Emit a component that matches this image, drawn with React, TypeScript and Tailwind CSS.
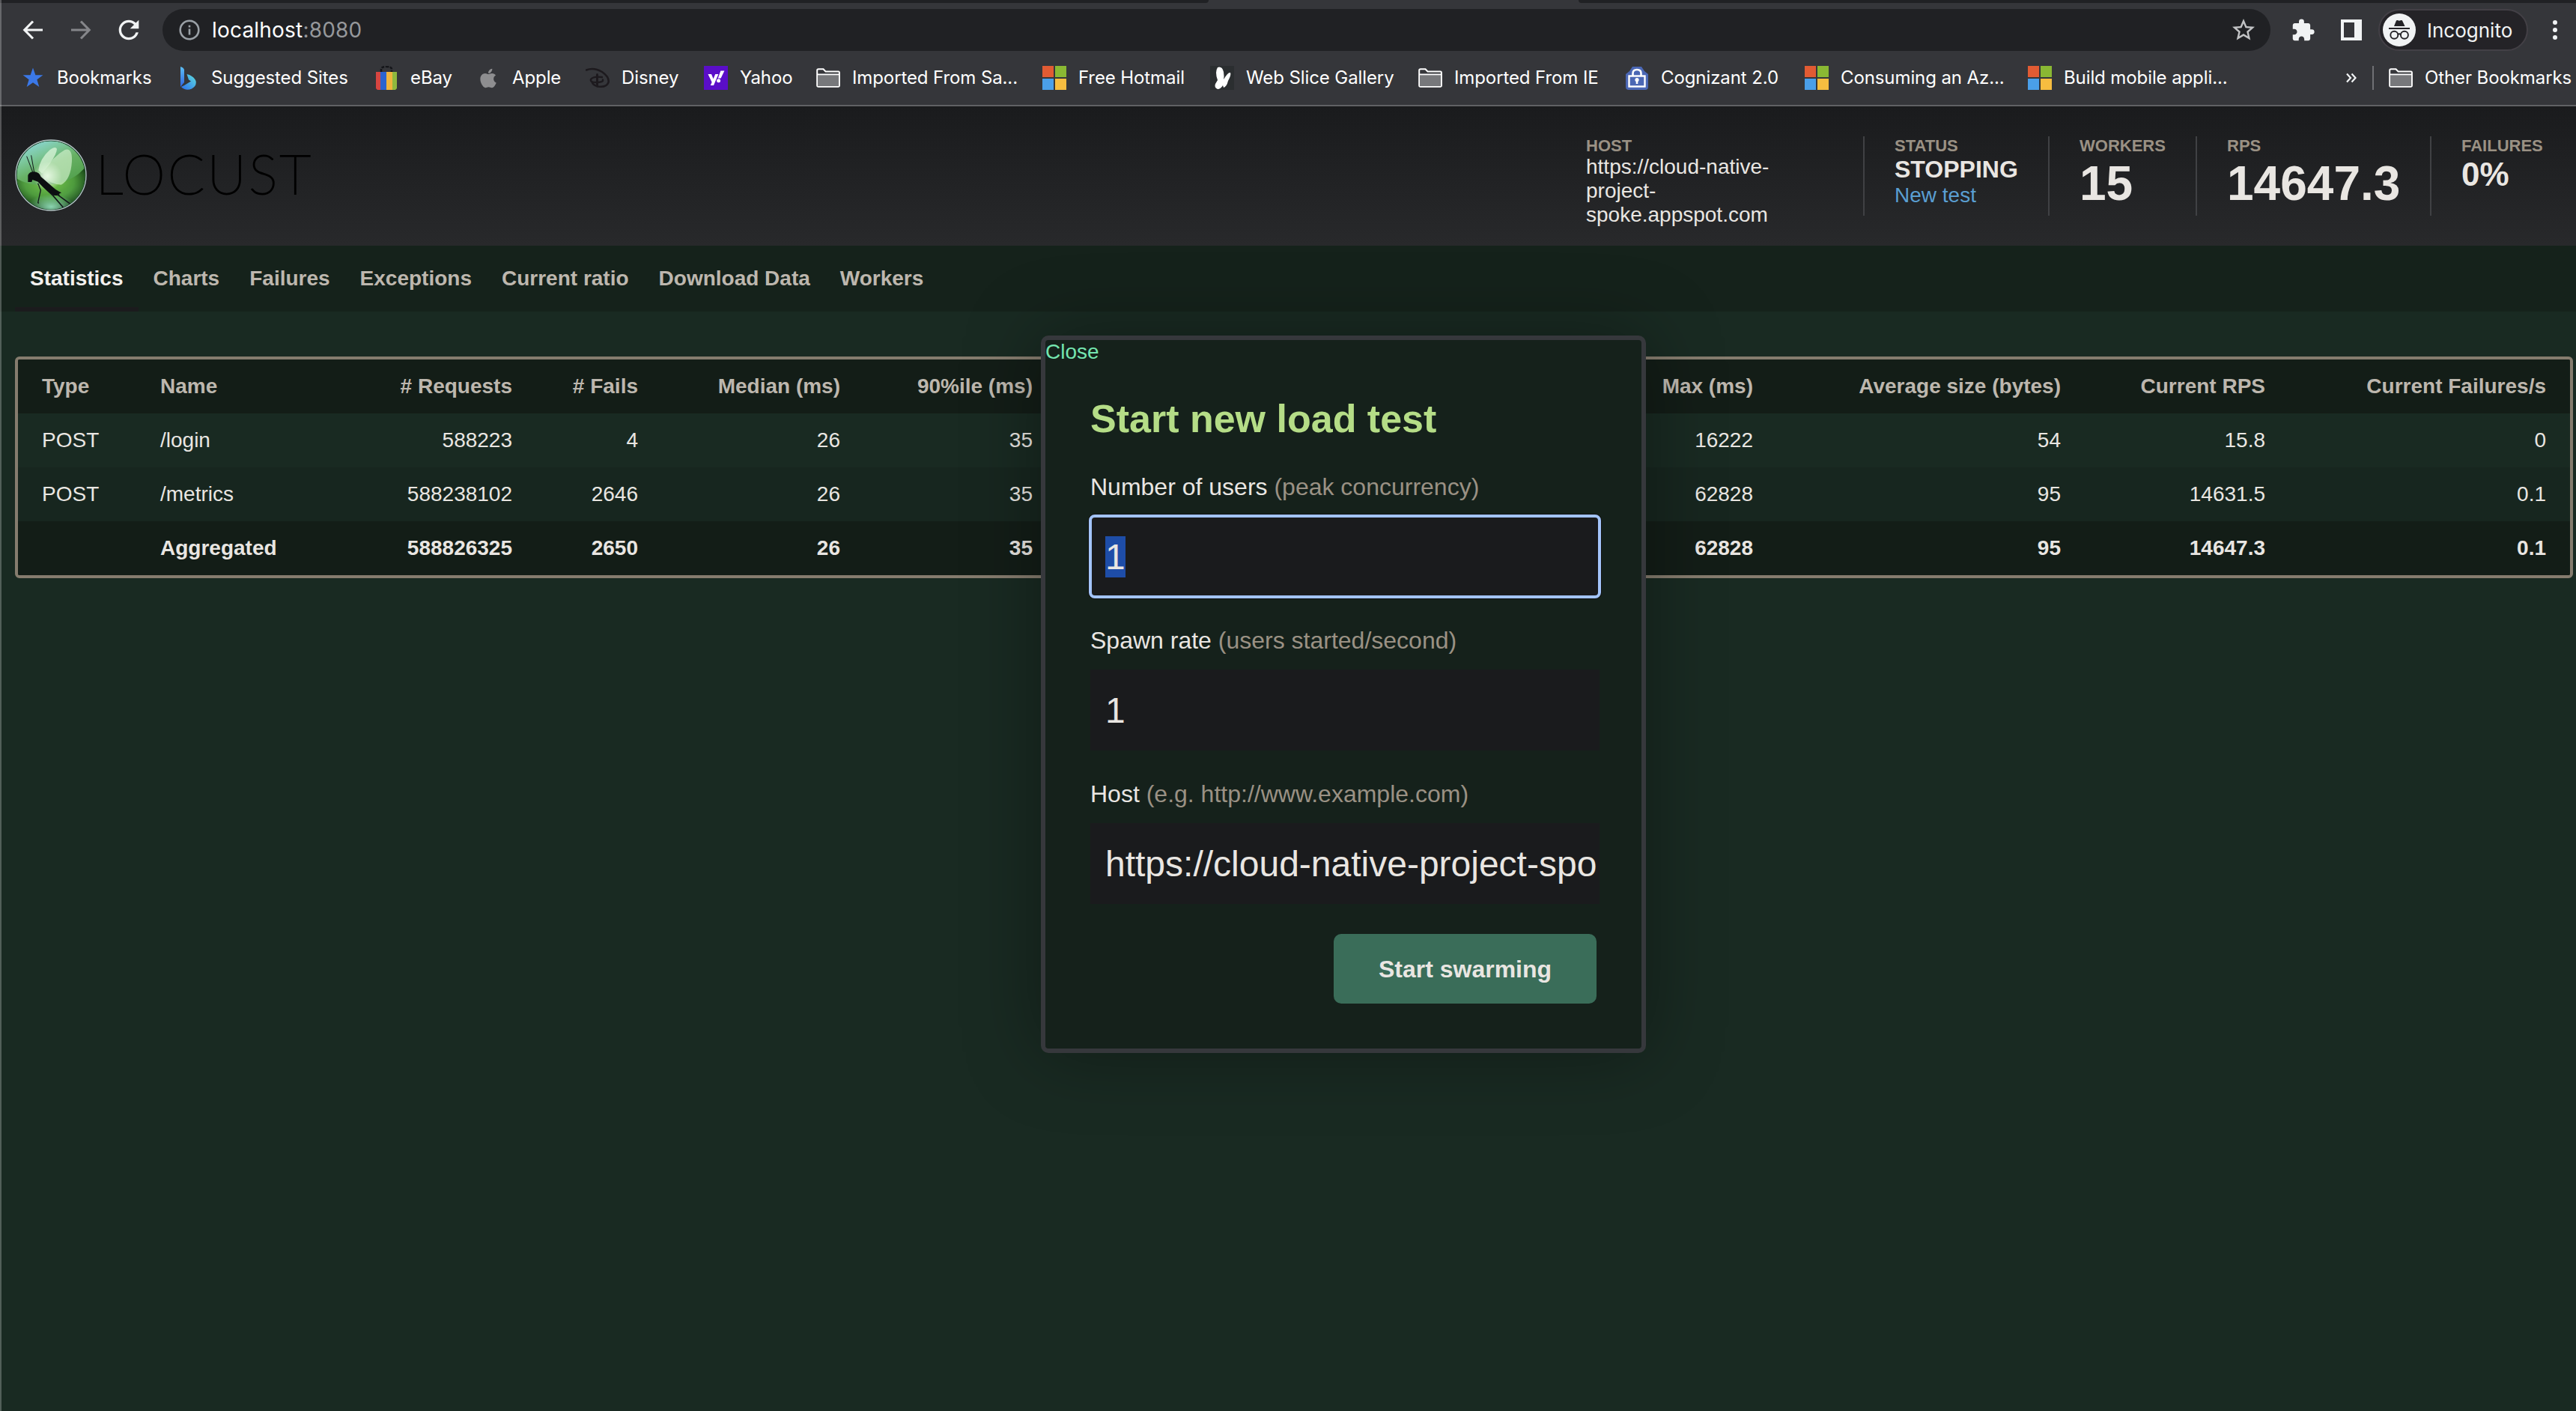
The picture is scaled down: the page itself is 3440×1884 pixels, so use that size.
import React from "react";
import { MdExtension, MdRefresh, MdStarBorder } from "react-icons/md";
import { FaApple } from "react-icons/fa";

function FolderIcon() {
  return (
    <svg width="32" height="26" viewBox="0 0 32 26">
      <path d="M1.2 3 Q1.2 1.2 3 1.2 H9.5 L12.5 4.4 H29.6 Q30.9 4.4 30.9 6 V23 Q30.9 24.8 29.2 24.8 H3 Q1.2 24.8 1.2 23 Z" fill="#35363a" stroke="#fff" strokeWidth="2" />
      <rect x="2" y="9" width="28" height="15" fill="#77787b" />
      <path d="M1.2 8.4 H31" stroke="#fff" strokeWidth="1.8" />
    </svg>
  );
}

function StarIcon() {
  return (
    <svg width="32" height="32" viewBox="0 0 32 32">
      <path d="M16 2.5 L19.4 12.2 H29.4 L21.4 18.2 L24.3 28 L16 22.2 L7.7 28 L10.6 18.2 L2.6 12.2 H12.6 Z" fill="#3b78e7" />
    </svg>
  );
}

function BingIcon() {
  return (
    <svg width="32" height="32" viewBox="0 0 32 32">
      <defs>
        <linearGradient id="bing-a" x1="0" y1="0" x2="0" y2="1">
          <stop offset="0" stopColor="#5cc0f5" />
          <stop offset="1" stopColor="#2f63e0" />
        </linearGradient>
        <linearGradient id="bing-b" x1="1" y1="0" x2="0" y2="1">
          <stop offset="0" stopColor="#5fe0dc" />
          <stop offset="1" stopColor="#2c6ff0" />
        </linearGradient>
      </defs>
      <path d="M7 1 Q11 2 12 5 V22 L7 28 Z" fill="url(#bing-a)" />
      <path d="M15.5 11 Q24 13 27.5 20 Q29 27 22 30.5 Q14 34 8 28 L12 26 L21 20.5 L18 18.5 Z" fill="url(#bing-b)" />
    </svg>
  );
}

function EbayIcon() {
  return (
    <svg width="32" height="32" viewBox="0 0 32 32">
      <path d="M9 8 V4.5 Q9 1 16 1 Q23 1 23 4.5 V8" fill="none" stroke="#15161a" strokeWidth="2.6" strokeDasharray="4 1.5" />
      <path d="M2 8 H8 V32 H4 L2 30 Z" fill="#d64541" />
      <rect x="8" y="8" width="8" height="24" fill="#2a63cf" />
      <rect x="16" y="8" width="8" height="24" fill="#efb43c" />
      <path d="M24 8 H30 V30 L28 32 H24 Z" fill="#8fb93e" />
    </svg>
  );
}

function DisneyIcon() {
  return (
    <svg width="32" height="32" viewBox="0 0 32 32" fill="none" stroke="#1d1a1e" strokeLinecap="round">
      <path d="M1 5.5 Q11 1.5 22 8 Q32 15 30.5 22 Q28 29 17 27.5 Q10.5 26 9 22.5" strokeWidth="2.6" />
      <path d="M15.5 11.5 V27" strokeWidth="3" />
      <path d="M22 15 Q10 13.5 7 18 Q6 22 14 22 Q24 22 23 18.5" strokeWidth="2.4" />
    </svg>
  );
}

function YahooIcon() {
  return (
    <span className="flex h-8 w-8 items-center justify-center bg-[#5a0ec8]">
      <svg width="32" height="32" viewBox="0 0 32 32" fill="#fff">
        <path d="M5.5 11 H10 L12.6 17.2 L15.2 11 H19.4 L13 26 H8.8 L10.6 21.8 Z" />
        <path d="M22.4 6.5 H27.4 L22.6 16.6 H18.8 Z" />
        <circle cx="19.6" cy="19.8" r="2.5" />
      </svg>
    </span>
  );
}

function MicrosoftIcon() {
  return (
    <span className="grid h-8 w-8 grid-cols-2 gap-[2px]">
      <span className="bg-[#e15b33]" />
      <span className="bg-[#8ab833]" />
      <span className="bg-[#4a9fe9]" />
      <span className="bg-[#f6bd40]" />
    </span>
  );
}

function ButterflyIcon() {
  return (
    <svg width="32" height="32" viewBox="0 0 32 32">
      <rect width="32" height="32" fill="#2b2e30" />
      <path d="M10 2 Q16 0 18 8 Q19 14 18 18 Q24 8 27 9 Q28.500 12 24 20 Q22 28 18 29 L17 26 Q14 31 10 31 Q5 29 7 24 L10 19 Q6 8 10 2 Z" fill="#fff" />
    </svg>
  );
}

function LockIcon() {
  return (
    <svg width="32" height="32" viewBox="0 0 32 32">
      <path d="M10 1 H22 L26 7 L31 11 V28 Q31 32 27 32 H5 Q1 32 1 28 V11 L6 7 Z" fill="#4b67b4" />
      <path d="M10.500 14 V10 Q10.500 5 16 5 Q21.500 5 21.500 10 V14" fill="none" stroke="#fff" strokeWidth="2.6" />
      <rect x="5.500" y="13.500" width="21" height="14" fill="none" stroke="#fff" strokeWidth="2.400" />
      <path d="M16 17 V24" stroke="#fff" strokeWidth="2.600" />
      <circle cx="16" cy="18.500" r="2.600" fill="#fff" />
    </svg>
  );
}

const bookmarks = [
  { label: "Bookmarks", icon: <StarIcon />, box: "w-[206px]" },
  { label: "Suggested Sites", icon: <BingIcon />, box: "w-[266px]" },
  { label: "eBay", icon: <EbayIcon />, box: "w-[136px]" },
  { label: "Apple", icon: <FaApple className="h-[29px] w-8 text-[#8e8e90]" />, box: "w-[146px]" },
  { label: "Disney", icon: <DisneyIcon />, box: "w-[158px]" },
  { label: "Yahoo", icon: <YahooIcon />, box: "w-[150px]" },
  { label: "Imported From Sa...", icon: <FolderIcon />, box: "w-[302px]" },
  { label: "Free Hotmail", icon: <MicrosoftIcon />, box: "w-[224px]" },
  { label: "Web Slice Gallery", icon: <ButterflyIcon />, box: "w-[278px]" },
  { label: "Imported From IE", icon: <FolderIcon />, box: "w-[276px]" },
  { label: "Cognizant 2.0", icon: <LockIcon />, box: "w-[240px]" },
  { label: "Consuming an Az...", icon: <MicrosoftIcon />, box: "w-[298px]" },
  { label: "Build mobile appli...", icon: <MicrosoftIcon />, box: "w-[424px]" },
];

function Toolbar() {
  return (
    <div className="flex h-[72px] items-center">
      <div className="flex w-[217px] items-center pl-[28px]">
        <svg width="32" height="32" viewBox="0 0 32 32" fill="none" stroke="#f1f3f4" strokeWidth="3.2">
          <path d="M29 16 H5 M16 4.500 L4.800 16 L16 27.500" />
        </svg>
        <svg className="ml-[32px]" width="32" height="32" viewBox="0 0 32 32" fill="none" stroke="#85868a" strokeWidth="3.200">
          <path d="M3 16 H27 M16 4.500 L27.200 16 L16 27.500" />
        </svg>
        <MdRefresh className="ml-[28px] h-10 w-10 text-[#f1f3f4]" />
      </div>
      <div className="flex h-14 w-[2815px] items-center rounded-full bg-[#202124] pl-[21px]">
        <svg width="30" height="30" viewBox="0 0 30 30">
          <circle cx="15" cy="15" r="12.300" fill="none" stroke="#9aa0a6" strokeWidth="2.600" />
          <path d="M15 13.500 V21.500 M15 8.800 V11.500" stroke="#9aa0a6" strokeWidth="2.600" />
        </svg>
        <span className="ml-[15px] w-[2695px] text-[28px] leading-[40px] tracking-[0.2px] text-[#fff]">
          localhost<span className="text-[#96989b]">:8080</span>
        </span>
        <MdStarBorder className="h-9 w-9 shrink-0 text-[#c2c3c5]" />
      </div>
      <MdExtension className="ml-[27px] h-[33px] w-[33px] text-[#f1f3f4]" />
      <span className="ml-[34px] h-7 w-7 bg-[#f1f3f4] p-1">
        <span className="block h-5 w-[14px] bg-[#35363a]" />
      </span>
      <div className="ml-[22px] flex h-14 w-[200px] items-center rounded-full border-2 border-[#434046] bg-[#242327] pl-1">
        <svg width="44" height="44" viewBox="0 0 44 44">
          <circle cx="22" cy="22" r="22" fill="#f1f3f4" />
          <path d="M15 17 L18 9.500 Q18.600 8.600 19.600 9 L22 9.800 L24.400 9 Q25.600 8.600 26 9.500 L29.500 17 Z" fill="#242327" />
          <path d="M8 20 H36" stroke="#242327" strokeWidth="2" />
          <g fill="none" stroke="#242327" strokeWidth="1.900">
            <circle cx="15.300" cy="28.800" r="5" />
            <circle cx="28.900" cy="28.800" r="5" />
            <path d="M20 28 Q22 26.600 24 28" />
          </g>
        </svg>
        <span className="ml-[15px] pt-[2px] text-[26px] leading-[40px] text-[#f1f3f4]">Incognito</span>
      </div>
      <div className="ml-[33px] flex flex-col gap-1">
        <span className="h-[6px] w-[6px] rounded-full bg-[#f1f3f4]" />
        <span className="h-[6px] w-[6px] rounded-full bg-[#f1f3f4]" />
        <span className="h-[6px] w-[6px] rounded-full bg-[#f1f3f4]" />
      </div>
    </div>
  );
}

function BrowserChrome() {
  return (
    <div className="h-[142px] border-b-2 border-[#606164] bg-[#35363a] font-['Inter',sans-serif]">
      <div className="flex h-1 justify-between">
        <div className="w-[1614px] rounded-br-[6px] bg-[#202124]" />
        <div className="w-[1332px] rounded-bl-[6px] bg-[#202124]" />
      </div>
      <Toolbar />
      <div className="flex h-14 items-center pl-[28px] text-[24px] tracking-[-0.1px] whitespace-nowrap text-[#fff]">
        {bookmarks.map((b) => (
          <div key={b.label} className={`flex shrink-0 items-center gap-4 ${b.box}`}>
            <span className="flex h-8 w-8 items-center justify-center">{b.icon}</span>
            <span className="leading-[30px]">{b.label}</span>
          </div>
        ))}
        <svg width="16" height="16" viewBox="0 0 16 16" fill="none" stroke="#f1f3f4" strokeWidth="2.200">
          <path d="M2 2.500 L7 8 L2 13.500 M8.500 2.500 L13.500 8 L8.500 13.500" />
        </svg>
        <span className="ml-[20px] h-8 w-[2px] bg-[#6f7074]" />
        <span className="ml-[20px] flex items-center gap-4">
          <FolderIcon />
          <span className="leading-[30px]">Other Bookmarks</span>
        </span>
      </div>
    </div>
  );
}

function Emblem() {
  return (
    <svg width="96" height="96" viewBox="60 108 288 288">
      <defs>
        <linearGradient id="orb" x1="0.100" y1="0" x2="0.550" y2="1">
          <stop offset="0" stopColor="#8fdbe6" />
          <stop offset="0.250" stopColor="#7cc79c" />
          <stop offset="0.450" stopColor="#67b063" />
          <stop offset="0.800" stopColor="#4f9e4a" />
          <stop offset="1" stopColor="#84cda8" />
        </linearGradient>
        <radialGradient id="orb-low" cx="0.480" cy="0.350" r="0.580">
          <stop offset="0" stopColor="#7fce4d" stopOpacity="0.900" />
          <stop offset="0.600" stopColor="#4d9a3a" stopOpacity="0.850" />
          <stop offset="1" stopColor="#0f3a10" stopOpacity="0.950" />
        </radialGradient>
        <radialGradient id="orb-foot">
          <stop offset="0" stopColor="#97e2c0" stopOpacity="0.900" />
          <stop offset="1" stopColor="#97e2c0" stopOpacity="0" />
        </radialGradient>
        <radialGradient id="orb-glow">
          <stop offset="0" stopColor="#ffffff" />
          <stop offset="1" stopColor="#ffffff" stopOpacity="0" />
        </radialGradient>
        <clipPath id="orb-clip">
          <circle cx="204" cy="252" r="137" />
        </clipPath>
      </defs>
      <circle cx="204" cy="252" r="141" fill="#143a22" stroke="#b4c6c6" strokeWidth="4" />
      <g clipPath="url(#orb-clip)">
        <circle cx="204" cy="252" r="137" fill="url(#orb)" />
        <path d="M60 262 Q120 300 210 288 Q300 275 345 215 V400 H60 Z" fill="url(#orb-low)" />
        <ellipse cx="205" cy="378" rx="95" ry="50" fill="url(#orb-foot)" />
        <circle cx="190" cy="255" r="58" fill="url(#orb-glow)" />
        <path d="M154 232 Q160 185 200 150 Q222 134 228 146 Q228 165 200 205 L168 245 Z" fill="#dcf5da" opacity="0.750" />
        <path d="M170 240 Q215 175 260 150 Q290 140 288 195 Q284 270 245 290 Q205 290 182 262 Z" fill="#d6f2d0" opacity="0.650" />
        <path d="M112 252 Q118 236 138 238 Q158 240 164 258 L208 296 Q222 310 246 322 L236 327 L240 334 L208 332 Q176 305 152 278 L130 270 L127 279 H112 Z" fill="#0c0f10" />
        <g fill="none" stroke="#12181a">
          <path d="M132 242 L107 176 M137 240 L125 172" strokeWidth="3" />
          <path d="M152 284 L163 312 L152 362 L156 364" strokeWidth="4" />
          <path d="M205 325 L256 384 M228 328 L286 370" strokeWidth="5" />
        </g>
      </g>
    </svg>
  );
}

const labelClass = "text-[22px] font-bold leading-[24px] text-[#9a9184]";

function Header() {
  return (
    <header className="flex h-[186px] justify-between bg-gradient-to-b from-[#1a1b1d] to-[#28292b]">
      <div className="flex items-start pl-[20px] pt-[44px]">
        <Emblem />
        <span className="ml-[12px] font-['Lato',sans-serif] text-[72px] font-[100] leading-[91px] tracking-[3.6px] text-black [-webkit-text-stroke:2px_black]">LOCUST</span>
      </div>
      <div className="flex pt-[40px] text-[28px] leading-[32px] text-[#e9e6e2]">
        <div className="h-[106px] w-[370px] pt-px">
          <div className={labelClass}>HOST</div>
          <div>
            https://cloud-native-
            <br />
            project-
            <br />
            spoke.appspot.com
          </div>
        </div>
        <div className="h-[106px] w-[247px] border-l-2 border-[#404144] pt-px pl-[40px]">
          <div className={labelClass}>STATUS</div>
          <div className="text-[32px] leading-[38px] font-bold">STOPPING</div>
          <div className="text-[#5a9fd2]">New test</div>
        </div>
        <div className="h-[106px] w-[197px] border-l-2 border-[#404144] pt-px pl-[40px]">
          <div className={labelClass}>WORKERS</div>
          <div className="text-[64px] leading-[76px] font-bold">15</div>
        </div>
        <div className="h-[106px] w-[313px] border-l-2 border-[#404144] pt-px pl-[40px]">
          <div className={labelClass}>RPS</div>
          <div className="text-[64px] leading-[76px] font-bold">14647.3</div>
        </div>
        <div className="h-[106px] w-[195px] border-l-2 border-[#404144] pt-px pl-[40px]">
          <div className={labelClass}>FAILURES</div>
          <div className="text-[44px] leading-[51px] font-bold">0%</div>
        </div>
      </div>
    </header>
  );
}

const tabs = ["Statistics", "Charts", "Failures", "Exceptions", "Current ratio", "Download Data", "Workers"];

function Tabs() {
  return (
    <nav className="flex h-[88px] bg-[#15221b] pl-[20px] text-[28px] leading-[88px] font-bold">
      {tabs.map((t, i) => (
        <a
          key={t}
          className={
            i === 0
              ? "h-[88px] border-b-[6px] border-[#1b1b1d] px-[20px] text-[#f3f1ee]"
              : "h-[88px] px-[20px] text-[#bdb7ae]"
          }
        >
          {t}
        </a>
      ))}
    </nav>
  );
}

const rows = [
  { cells: ["Type", "Name", "# Requests", "# Fails", "Median (ms)", "90%ile (ms)", "", "Max (ms)", "Average size (bytes)", "Current RPS", "Current Failures/s"], style: "bg-[#131d17] font-bold text-[#bdb7ae]" },
  { cells: ["POST", "/login", "588223", "4", "26", "35", "", "16222", "54", "15.8", "0"], style: "bg-[#192a22] text-[#e9e6e2]" },
  { cells: ["POST", "/metrics", "588238102", "2646", "26", "35", "", "62828", "95", "14631.5", "0.1"], style: "bg-[#17261f] text-[#e9e6e2]" },
  { cells: ["", "Aggregated", "588826325", "2650", "26", "35", "", "62828", "95", "14647.3", "0.1"], style: "bg-[#131d17] font-bold text-[#e9e6e2]" },
];

function StatsTable() {
  return (
    <section className="mt-[60px] ml-[20px] w-[3416px] overflow-hidden rounded-[6px] border-4 border-[#857c6e]">
      {rows.map((r, i) => (
        <div
          key={i}
          className={`grid h-[72px] grid-cols-[158px_278px_256px_168px_270px_257px_777px_185px_411px_273px_375px] text-[28px] leading-[72px] whitespace-nowrap ${r.style}`}
        >
          {r.cells.map((c, j) => (
            <div key={j} className={j < 2 ? "pl-8 text-left" : "pr-8 text-right"}>
              {c}
            </div>
          ))}
        </div>
      ))}
    </section>
  );
}

function Field({ label, hint, value, focused }: { label: string; hint: string; value: string; focused?: boolean }) {
  return (
    <div className="h-[205px]">
      <div className="h-[57px] text-[32px] leading-[37px] text-[#e9e6e2]">
        {label} <span className="text-[#9a9184]">{hint}</span>
      </div>
      <div
        className={
          focused
            ? "h-[108px] overflow-hidden rounded-[6px] bg-[#1a1b1d] pt-[27px] pl-[20px] ring-[3px] ring-[#101010] outline-4 -outline-offset-2 outline-[#a3c4fa]"
            : "h-[108px] overflow-hidden bg-[#1a1b1d] pt-[27px] pl-[20px]"
        }
      >
        <span className={focused ? "inline-block bg-[#1e4da8] text-[48px] leading-[55px] text-[#e9e6e2]" : "inline-block text-[48px] leading-[55px] text-[#e9e6e2]"}>{value}</span>
      </div>
    </div>
  );
}

function Dialog() {
  return (
    <div className="absolute top-[448px] left-[1390px] h-[958px] w-[808px] rounded-[10px] border-[6px] border-[#36383c] bg-[#15211b] shadow-[0_0_100px_rgba(0,0,0,0.35)]">
      <div className="text-[28px] leading-[32px] text-[#74e5b0]">Close</div>
      <div className="px-[60px] pt-[45px]">
        <h2 className="h-[101px] text-[52px] leading-[56px] font-bold text-[#b5dd87]">Start new load test</h2>
        <div className="w-[680px]">
          <Field label="Number of users" hint="(peak concurrency)" value="1" focused />
          <Field label="Spawn rate" hint="(users started/second)" value="1" />
          <Field label="Host" hint="(e.g. http://www.example.com)" value="https://cloud-native-project-spo" />
          <div className="flex justify-end pr-[4px]">
            <button className="h-[93px] w-[351px] rounded-[10px] bg-[#3a6d59] text-[32px] font-bold text-[#e9e6e2]">Start swarming</button>
          </div>
        </div>
      </div>
    </div>
  );
}

export default function App() {
  return (
    <div className="relative h-[1884px] w-[3440px] overflow-hidden bg-[#192a22] font-['Liberation_Sans',Arial,sans-serif]">
      <BrowserChrome />
      <Header />
      <Tabs />
      <StatsTable />
      <Dialog />
      <div className="absolute top-0 left-0 h-full w-[2px] bg-white/25" />
    </div>
  );
}
